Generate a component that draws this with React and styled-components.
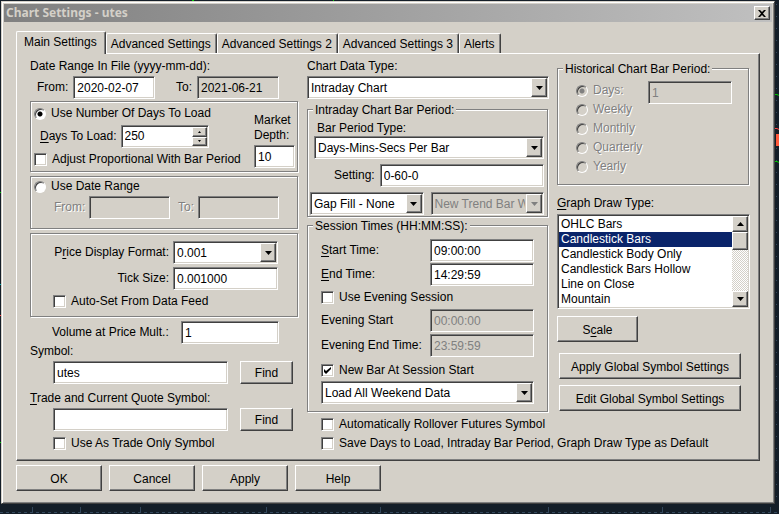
import React, { useState } from "react";
import styled, { createGlobalStyle, css } from "styled-components";

const face = "#d4d0c8";
const shade = "#808080";
const dark = "#404040";
const navy = "#0a246a";

const GlobalStyle = createGlobalStyle`
  *, *::before, *::after { box-sizing: border-box; }
  body {
    margin: 0;
    background: #141e28;
    color: #000;
    font-family: "Liberation Sans", Arial, sans-serif;
    font-size: 12px;
    line-height: 15px;
  }
  button, input, select { font: inherit; color: inherit; margin: 0; border-radius: 0; }
  u { text-underline-offset: 2px; }
`;

const sunken = css`
  border: 1px solid;
  border-color: ${shade} #fff #fff ${shade};
  box-shadow: inset 1px 1px 0 ${dark}, inset -1px -1px 0 ${face};
`;

const raised = css`
  border: 1px solid;
  border-color: #fff ${dark} ${dark} #fff;
  box-shadow: inset -1px -1px 0 ${shade};
`;

const etched = css`
  border: 1px solid ${shade};
  box-shadow: 1px 1px 0 #fff, inset 1px 1px 0 #fff;
`;

const Desktop = styled.div`
  position: relative;
  min-height: 100vh;
  padding: 1px 4px 10px 1px;
  overflow: hidden;
`;

const Backdrop = styled.svg`
  position: absolute;
  inset: 0;
  width: 100%;
  height: 100%;
`;

const Dialog = styled.main`
  position: relative;
  padding: 2px;
  background: ${face};
  border: 1px solid;
  border-color: ${face} ${dark} ${dark} ${face};
  box-shadow: inset 1px 1px 0 #fff, inset -1px -1px 0 ${shade};
`;

const TitleBar = styled.header`
  display: flex;
  align-items: center;
  justify-content: space-between;
  height: 18px;
  padding: 0 2px;
  background: linear-gradient(90deg, #808080, #c0c0c0);
`;

const Title = styled.h1`
  margin: 0;
  color: ${face};
  font: bold 12px/18px "Noto Sans", "DejaVu Sans", sans-serif;
`;

const CloseButton = styled.button`
  ${raised}
  display: grid;
  place-items: center;
  width: 16px;
  height: 14px;
  padding: 0;
  background: ${face};
`;

const Body = styled.div`
  padding: 9px 12px 10px;
`;

const Tabs = styled.div`
  display: flex;
  align-items: flex-end;
`;

const Tab = styled.button`
  position: relative;
  z-index: ${(p) => (p.$active ? 1 : 0)};
  height: ${(p) => (p.$active ? 23 : 20)}px;
  margin-bottom: ${(p) => (p.$active ? -1 : 0)}px;
  padding: ${(p) => (p.$active ? "0 8px 1px 7px" : "2px 5px 0 4px")};
  background: ${face};
  border: 1px solid;
  border-color: #fff ${dark} transparent #fff;
  border-bottom: 0;
  && { border-radius: 2px 2px 0 0; }
  box-shadow: inset -1px 0 0 ${shade};
`;

const Panel = styled.section`
  ${raised}
  position: relative;
  z-index: 0;
  display: grid;
  grid-template-columns: minmax(0, 269fr) minmax(0, 443fr);
  column-gap: 8px;
  padding: 5px 9px 9px 13px;
`;

const Stack = styled.div`
  display: flex;
  flex-direction: column;
  gap: ${(p) => p.$gap || 0}px;
  padding-top: ${(p) => p.$top || 0}px;
`;

const TwoColumns = styled.div`
  display: grid;
  grid-template-columns: minmax(0, 242fr) minmax(0, 193fr);
  column-gap: 8px;
`;

const Row = styled.div`
  display: flex;
  align-items: center;
  gap: ${(p) => p.$gap ?? 4}px;
  padding-left: ${(p) => p.$indent || 0}px;
  padding-right: ${(p) => p.$end || 0}px;
  justify-content: ${(p) => p.$justify || "flex-start"};
`;

const dimmed = css`
  color: ${shade};
  text-shadow: 1px 1px 0 #fff;
`;

const Label = styled.label`
  white-space: nowrap;
  ${(p) => p.$dim && dimmed}
`;

const TextField = styled.input`
  ${sunken}
  width: ${(p) => (p.$width ? `${p.$width}px` : "auto")};
  ${(p) => !p.$width && css`flex: 1;`}
  min-width: 0;
  height: 23px;
  padding: 2px 3px;
  background: #fff;
  outline: 0;
  &:read-only { background: ${face}; }
  &:disabled { background: ${face}; color: ${shade}; }
`;

const Group = styled.div`
  ${etched}
  margin-right: 1px;
`;

const DaysGroup = styled(Group)`
  display: flex;
  justify-content: space-between;
  padding: 4px 2px 3px 3px;
`;

const DateGroup = styled(Group)`
  padding: 2px 3px 9px;
`;

const PriceGroup = styled(Group)`
  padding: 7px 19px 7px 22px;
`;

const Legend = styled.legend`
  height: 15px;
  margin-left: 6px;
  padding: 0 2px;
  background: ${face};
`;

const Fieldset = styled.fieldset`
  position: relative;
  min-width: 0;
  margin: 0 1px 0 0;
  padding: 0;
  border: 0;
  &::before {
    ${etched}
    content: "";
    position: absolute;
    inset: -9px 0 0;
    z-index: -1;
  }
`;

const FieldsetBody = styled.div`
  padding: ${(p) => p.$pad};
`;

const Check = styled.label`
  position: relative;
  display: flex;
  align-items: center;
  gap: 5px;
  height: 15px;
  white-space: nowrap;
  svg { position: absolute; left: 3px; top: 4px; pointer-events: none; display: none; }
  input:checked + svg { display: block; }
`;

const CheckInput = styled.input`
  ${sunken}
  appearance: none;
  flex: none;
  width: 13px;
  height: 13px;
  background: #fff;
`;

const RadioInput = styled.input`
  appearance: none;
  flex: none;
  width: 12px;
  height: 12px;
  border: 1px solid;
  border-color: ${shade} #fff #fff ${shade};
  && { border-radius: 50%; }
  background: #fff;
  box-shadow: inset 1px 1px 0 ${dark};
  &:disabled { background: ${face}; }
  &:checked { background: radial-gradient(circle, #000 0 2px, #fff 3px); }
  &:checked:disabled { background: radial-gradient(circle, ${shade} 0 2px, ${face} 3px); }
`;

const RadioLabel = styled.label`
  display: flex;
  align-items: center;
  gap: 5px;
  height: ${(p) => p.$height || 15}px;
  white-space: nowrap;
  ${(p) => p.$dim && dimmed}
`;

const ComboBox = styled.span`
  position: relative;
  display: block;
  height: 23px;
  min-width: 0;
  ${(p) => (p.$width ? css`width: ${p.$width}px;` : css`flex: 1;`)}
`;

const ComboSelect = styled.select`
  ${sunken}
  appearance: none;
  display: block;
  width: 100%;
  height: 23px;
  padding: 2px 18px 0 3px;
  overflow: hidden;
  background: #fff;
  outline: 0;
  &:disabled { background: ${face}; color: ${shade}; opacity: 1; }
`;

const ComboArrow = styled.span`
  ${raised}
  position: absolute;
  top: 2px;
  right: 2px;
  bottom: 2px;
  display: grid;
  place-items: center;
  width: 16px;
  background: ${face};
  pointer-events: none;
`;

const Spinner = styled.span`
  ${sunken}
  display: flex;
  width: 88px;
  height: 23px;
  padding: 1px;
  background: #fff;
`;

const SpinnerInput = styled.input`
  flex: 1;
  min-width: 0;
  padding: 0 2px;
  border: 0;
  background: transparent;
  outline: 0;
`;

const SpinnerButtons = styled.span`
  display: grid;
  width: 15px;
  grid-template-rows: 1fr 1fr;
`;

const SmallButton = styled.button`
  ${raised}
  display: grid;
  place-items: center;
  min-height: 0;
  padding: 0;
  background: ${face};
`;

const PushButton = styled.button`
  ${raised}
  width: ${(p) => p.$width}px;
  height: ${(p) => p.$height || 26}px;
  padding: 2px 0 0;
  background: ${face};
`;

const FieldGrid = styled.div`
  display: grid;
  grid-template-columns: minmax(0, 1fr) auto;
  align-items: center;
  justify-items: ${(p) => p.$align || "start"};
  gap: ${(p) => p.$gap}px 4px;
`;

const PeriodRow = styled.div`
  display: flex;
  align-items: flex-start;
  justify-content: space-between;
`;

const ListBox = styled.div`
  ${sunken}
  display: flex;
  height: 95px;
  padding: 1px;
  background: #fff;
`;

const List = styled.select`
  flex: 1;
  min-width: 0;
  height: 91px;
  padding: 1px 0 0;
  border: 0;
  overflow: hidden;
  outline: 0;
  background: #fff;
  scrollbar-width: none;
`;

const Option = styled.option`
  height: 15px;
  min-height: 15px;
  padding: 0 2px;
  line-height: 15px;
  color: #000;
  &:checked { background: linear-gradient(${navy}, ${navy}); color: #fff; }
`;

const ScrollBar = styled.div`
  display: grid;
  grid-template-rows: 16px 18px 1fr 16px;
  width: 16px;
  background: repeating-conic-gradient(#fff 0 25%, ${face} 0 50%) 0 0 / 2px 2px;
`;

const Thumb = styled.span`
  ${raised}
  background: ${face};
`;

const Footer = styled.footer`
  display: flex;
  gap: 7px;
  padding-top: 4px;
`;

function Arrow({ up, small, color = "#000" }) {
  const w = small ? 3 : 7;
  const h = small ? 2 : 4;
  return (
    <svg width={w} height={h} viewBox={`0 0 ${w} ${h}`} fill={color} aria-hidden="true">
      <path d={up ? `M0 ${h}H${w}L${w / 2} 0Z` : `M0 0H${w}L${w / 2} ${h}Z`} />
    </svg>
  );
}

function Combo({ id, value, width, disabled, label }) {
  return (
    <ComboBox $width={width}>
      <ComboSelect id={id} disabled={disabled} aria-label={label}>
        <option>{value}</option>
      </ComboSelect>
      <ComboArrow><Arrow color={disabled ? shade : "#000"} /></ComboArrow>
    </ComboBox>
  );
}

function CheckBox({ children, checked }) {
  return (
    <Check>
      <CheckInput type="checkbox" defaultChecked={checked} />
      <svg width="7" height="7" viewBox="0 0 7 7" aria-hidden="true">
        <path d="M0 2v3l2 2l5-5V0L2 4Z" />
      </svg>
      <span>{children}</span>
    </Check>
  );
}

function ChartBackdrop() {
  return (
    <Backdrop viewBox="0 0 779 514" preserveAspectRatio="none" aria-hidden="true">
      <path d="M0 512.5H779" stroke="#34485c" strokeDasharray="3 3" />
      <path d="M32.5 507v5M80.5 507v5M140.5 507v5M266.5 507v5M380.5 507v5M548.5 507v5M662.5 507v5M770.5 507v5" stroke="#34485c" />
      <path d="M776.5 4V506" stroke="#34485c" strokeDasharray="1 11" />
      <path d="M192 .5h2M333 .5h1M775 94.5h2l2 1M775 161.5h2l2 1M0 192.5h1M0 442.5h1" stroke="#0c0" fill="none" />
      <path d="M0 284.5h1" stroke="#0aa" />
      <path d="M0 315.5h1M775 128.5h2l2 1" stroke="#f44" fill="none" />
      <path d="M776 134h3v12h-3z" fill="#ff5a3c" />
    </Backdrop>
  );
}

const tabs = ["Main Settings", "Advanced Settings", "Advanced Settings 2", "Advanced Settings 3", "Alerts"];
const periods = ["Days:", "Weekly", "Monthly", "Quarterly", "Yearly"];
const drawTypes = ["OHLC Bars", "Candlestick Bars", "Candlestick Body Only", "Candlestick Bars Hollow", "Line on Close", "Mountain"];

function LeftColumn() {
  return (
    <Stack>
      <Stack $gap={2}>
        <Label as="div">Date Range In File (yyyy-mm-dd):</Label>
        <Row $indent={7} $end={20} $justify="space-between">
          <Row $gap={5}>
            <Label htmlFor="file-from">From:</Label>
            <TextField id="file-from" $width={82} defaultValue="2020-02-07" />
          </Row>
          <Row $gap={5}>
            <Label htmlFor="file-to">To:</Label>
            <TextField id="file-to" $width={82} defaultValue="2021-06-21" readOnly />
          </Row>
        </Row>
      </Stack>
      <Stack $gap={4} $top={2}>
        <DaysGroup>
          <Stack $gap={4}>
            <RadioLabel>
              <RadioInput type="radio" name="range" defaultChecked />
              <span>Use Number Of Days To Load</span>
            </RadioLabel>
            <Row $indent={6}>
              <Label htmlFor="days"><u>D</u>ays To Load:</Label>
              <Spinner>
                <SpinnerInput id="days" defaultValue="250" />
                <SpinnerButtons>
                  <SmallButton aria-label="Increase days"><Arrow up small /></SmallButton>
                  <SmallButton aria-label="Decrease days"><Arrow small /></SmallButton>
                </SpinnerButtons>
              </Spinner>
            </Row>
            <CheckBox>Adjust Proportional With Bar Period</CheckBox>
          </Stack>
          <Stack $gap={2} $top={7}>
            <Label htmlFor="depth">Market<br />Depth:</Label>
            <TextField id="depth" $width={41} defaultValue="10" />
          </Stack>
        </DaysGroup>
        <DateGroup>
          <Stack $gap={2}>
            <RadioLabel>
              <RadioInput type="radio" name="range" />
              <span>Use Date Range</span>
            </RadioLabel>
            <Row $indent={20} $end={15} $justify="space-between">
              <Row>
                <Label htmlFor="range-from" $dim>From:</Label>
                <TextField id="range-from" $width={81} disabled />
              </Row>
              <Row>
                <Label htmlFor="range-to" $dim>To:</Label>
                <TextField id="range-to" $width={81} disabled />
              </Row>
            </Row>
          </Stack>
        </DateGroup>
        <PriceGroup>
          <Stack $gap={4}>
            <FieldGrid $gap={3} $align="end">
              <Label htmlFor="format">P<u>r</u>ice Display Format:</Label>
              <Combo id="format" width={105} value="0.001" />
              <Label htmlFor="tick">Tick Size:</Label>
              <TextField id="tick" $width={105} defaultValue="0.001000" />
            </FieldGrid>
            <CheckBox>Auto-Set From Data Feed</CheckBox>
          </Stack>
        </PriceGroup>
        <Row $indent={22} $end={20} $justify="space-between">
          <Label htmlFor="mult">Volume at Price Mult.:</Label>
          <TextField id="mult" $width={98} defaultValue="1" />
        </Row>
      </Stack>
      <Stack $gap={2}>
        <Label htmlFor="symbol">Symbol:</Label>
        <Row $gap={12} $indent={23} $end={6}>
          <TextField id="symbol" defaultValue="utes" />
          <PushButton $width={53} $height={23}>Find</PushButton>
        </Row>
      </Stack>
      <Stack $gap={2} $top={7}>
        <Label htmlFor="trade"><u>T</u>rade and Current Quote Symbol:</Label>
        <Row $gap={12} $indent={23} $end={6}>
          <TextField id="trade" />
          <PushButton $width={53} $height={23}>Find</PushButton>
        </Row>
      </Stack>
      <Row $indent={23}>
        <Stack $top={5}>
          <CheckBox>Use As Trade Only Symbol</CheckBox>
        </Stack>
      </Row>
    </Stack>
  );
}

function MiddleColumn() {
  return (
    <Stack>
      <Stack $gap={2}>
        <Label htmlFor="data-type">Chart Data Type:</Label>
        <Row><Combo id="data-type" value="Intraday Chart" /></Row>
      </Stack>
      <Stack $gap={2} $top={4}>
        <Fieldset>
          <Legend>Intraday Chart Bar Period:</Legend>
          <FieldsetBody $pad="3px 4px 2px 3px">
            <Stack $gap={5}>
              <Stack>
                <Row $indent={7}><Label htmlFor="bar-type">Bar Period Type:</Label></Row>
                <Row $indent={4}><Combo id="bar-type" value="Days-Mins-Secs Per Bar" /></Row>
              </Stack>
              <Row $indent={24} $gap={5}>
                <Label htmlFor="setting">Setting:</Label>
                <TextField id="setting" defaultValue="0-60-0" />
              </Row>
              <Row $gap={7}>
                <Combo label="Gap fill" value="Gap Fill - None" />
                <Combo label="Trend bar" value="New Trend Bar When" disabled />
              </Row>
            </Stack>
          </FieldsetBody>
        </Fieldset>
        <Fieldset>
          <Legend>Session Times (HH:MM:SS):</Legend>
          <FieldsetBody $pad="5px 14px 8px">
            <Stack $gap={4}>
              <FieldGrid $gap={1}>
                <Label htmlFor="start"><u>S</u>tart Time:</Label>
                <TextField id="start" $width={104} defaultValue="09:00:00" />
                <Label htmlFor="end"><u>E</u>nd Time:</Label>
                <TextField id="end" $width={104} defaultValue="14:29:59" />
              </FieldGrid>
              <CheckBox>Use Evening Session</CheckBox>
              <FieldGrid $gap={2}>
                <Label htmlFor="evening-start">Evening Start</Label>
                <TextField id="evening-start" $width={104} defaultValue="00:00:00" disabled />
                <Label htmlFor="evening-end">Evening End Time:</Label>
                <TextField id="evening-end" $width={104} defaultValue="23:59:59" disabled />
              </FieldGrid>
              <Stack $gap={3} $top={2}>
                <CheckBox checked>New Bar At Session Start</CheckBox>
                <Row><Combo label="Weekend data" value="Load All Weekend Data" /></Row>
              </Stack>
            </Stack>
          </FieldsetBody>
        </Fieldset>
      </Stack>
    </Stack>
  );
}

function RightColumn() {
  return (
    <Stack>
      <Stack $top={3}>
        <Fieldset>
          <Legend>Historical Chart Bar Period:</Legend>
          <FieldsetBody $pad="4px 17px 9px 19px">
            <PeriodRow>
              <Stack>
                {periods.map((name, i) => (
                  <RadioLabel key={name} $height={19} $dim>
                    <RadioInput type="radio" name="period" disabled defaultChecked={i === 0} />
                    <span>{name}</span>
                  </RadioLabel>
                ))}
              </Stack>
              <TextField aria-label="Days" $width={84} defaultValue="1" disabled />
            </PeriodRow>
          </FieldsetBody>
        </Fieldset>
      </Stack>
      <Stack $gap={3} $top={11}>
        <Label htmlFor="draw-type"><u>G</u>raph Draw Type:</Label>
        <ListBox>
          <List id="draw-type" size={6} defaultValue="Candlestick Bars">
            {drawTypes.map((name) => <Option key={name}>{name}</Option>)}
          </List>
          <ScrollBar>
            <SmallButton aria-label="Scroll up"><Arrow up /></SmallButton>
            <Thumb />
            <span />
            <SmallButton aria-label="Scroll down"><Arrow /></SmallButton>
          </ScrollBar>
        </ListBox>
      </Stack>
      <Stack $top={7}>
        <Row><PushButton $width={81}>S<u>c</u>ale</PushButton></Row>
      </Stack>
      <Row $indent={2}>
        <Stack $gap={6} $top={11}>
          <PushButton $width={182}>Apply Global Symbol Settings</PushButton>
          <PushButton $width={182}>Edit Global Symbol Settings</PushButton>
        </Stack>
      </Row>
    </Stack>
  );
}

export default function App() {
  const [active, setActive] = useState(0);
  return (
    <Desktop>
      <GlobalStyle />
      <ChartBackdrop />
      <Dialog>
        <TitleBar>
          <Title>Chart Settings - utes</Title>
          <CloseButton aria-label="Close">
            <svg width="8" height="7" viewBox="0 0 8 7" aria-hidden="true">
              <path d="M0 0h2l2 2l2-2h2L5 3.500l3 3.500H6L4 5L2 7H0l3-3.500Z" />
            </svg>
          </CloseButton>
        </TitleBar>
        <Body>
          <Tabs role="tablist">
            {tabs.map((name, i) => (
              <Tab key={name} role="tab" aria-selected={i === active} $active={i === active} onClick={() => setActive(i)}>
                {name}
              </Tab>
            ))}
          </Tabs>
          <Panel>
            <LeftColumn />
            <Stack>
              <TwoColumns>
                <MiddleColumn />
                <RightColumn />
              </TwoColumns>
              <Row $indent={14}>
                <Stack $gap={4} $top={5}>
                  <CheckBox>Automatically Rollover Futures Symbol</CheckBox>
                  <CheckBox>Save Days to Load, Intraday Bar Period, Graph Draw Type as Default</CheckBox>
                </Stack>
              </Row>
            </Stack>
          </Panel>
          <Footer>
            {["OK", "Cancel", "Apply", "Help"].map((name) => (
              <PushButton key={name} $width={86}>{name}</PushButton>
            ))}
          </Footer>
        </Body>
      </Dialog>
    </Desktop>
  );
}
